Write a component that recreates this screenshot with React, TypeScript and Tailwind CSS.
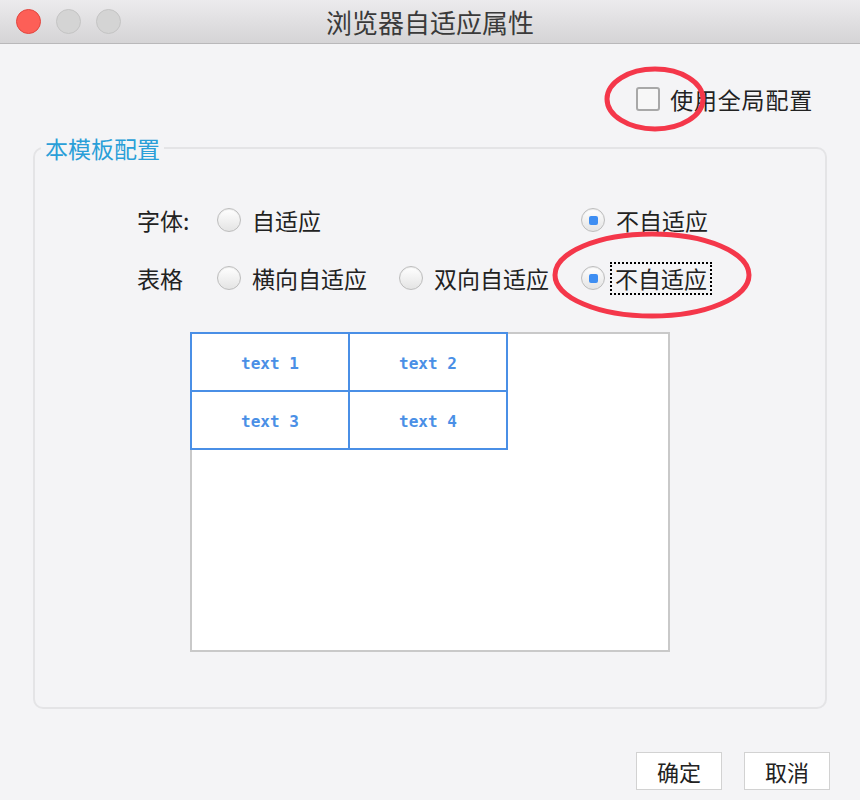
import React from 'react'

const cjk = { fontFamily: '"Noto Sans CJK SC", "Noto Sans", sans-serif' }

function Radio({ checked }: { checked?: boolean }) {
  return (
    <span className="flex h-[24px] w-[24px] items-center justify-center rounded-full border border-[#bdbdbd] bg-gradient-to-b from-[#ffffff] to-[#e4e4e4] shadow-[inset_0_1px_1px_rgba(0,0,0,0.08)]">
      {checked && <span className="h-[9px] w-[9px] rounded-[2px] bg-[#3e8ef2]" />}
    </span>
  )
}

function Option({ label, checked, focused }: { label: string; checked?: boolean; focused?: boolean }) {
  return (
    <label className="flex items-center gap-[11px]">
      <Radio checked={checked} />
      <span className={focused ? 'outline-2 outline-dotted outline-black -ml-[4px] px-[3px] leading-[29px]' : ''}>{label}</span>
    </label>
  )
}

export default function App() {
  const cells = ['text 1', 'text 2', 'text 3', 'text 4']
  return (
    <div className="relative flex h-[800px] w-[860px] flex-col bg-[#f4f4f6] text-[#222]" style={cjk}>
      {/* title bar */}
      <div className="relative flex h-[44px] items-center justify-center border-b border-[#b9b8ba] bg-gradient-to-b from-[#ecebed] to-[#d5d4d6]">
        <div className="absolute left-[16px] top-[9px] flex gap-[15px]">
          <span className="h-[25px] w-[25px] rounded-full border border-[#e2463f] bg-[#fd5f57]" />
          <span className="h-[25px] w-[25px] rounded-full border border-[#c4c4c4] bg-[#d4d4d4]" />
          <span className="h-[25px] w-[25px] rounded-full border border-[#c4c4c4] bg-[#d4d4d4]" />
        </div>
        <span className="text-[26px] text-[#3a3a3a]">浏览器自适应属性</span>
      </div>

      <div className="flex flex-1 flex-col px-[33px]">
        {/* global config */}
        <div className="mt-[43px] flex items-center justify-end gap-[10px] pr-[14px] text-[23px]">
          <span className="h-[24px] w-[24px] rounded-[3px] border-2 border-[#a8a8a8] bg-[#f7f7f7]" />
          <span className="leading-[24px] tracking-[0.8px]">使用全局配置</span>
        </div>

        {/* template config */}
        <fieldset className="mt-[21px] h-[577px] rounded-[10px] border-2 border-[#e4e4e6]">
          <legend className="ml-[6px] px-[4px] text-[23px] leading-[32px] text-[#2a9fd8]">本模板配置</legend>

          <div className="pl-[102px]">
            <div className="mt-[40px] grid grid-cols-[80px_182px_182px_auto] items-center gap-y-[26px] text-[23px] leading-[32px]">
              <span>字体:</span>
              <Option label="自适应" />
              <span />
              <Option label="不自适应" checked />

              <span>表格</span>
              <Option label="横向自适应" />
              <Option label="双向自适应" />
              <Option label="不自适应" checked focused />
            </div>

            {/* preview */}
            <div className="ml-[53px] mt-[38px] h-[320px] w-[480px] border-2 border-[#c9c9c9] bg-white">
              <table className="-ml-[2px] -mt-[2px] border-collapse">
                <tbody>
                  {[0, 1].map((r) => (
                    <tr key={r}>
                      {[0, 1].map((c) => (
                        <td
                          key={c}
                          className="h-[58px] w-[158px] border-2 border-[#4a8fe6] p-0 pt-[3px] text-center text-[16px] font-bold text-[#4a8fe6]"
                          style={{ fontFamily: '"DejaVu Sans Mono", monospace' }}
                        >
                          {cells[r * 2 + c]}
                        </td>
                      ))}
                    </tr>
                  ))}
                </tbody>
              </table>
            </div>
          </div>
        </fieldset>

        {/* buttons */}
        <div className="mt-[43px] flex justify-end gap-[22px]">
          <button className="h-[38px] w-[86px] border border-[#d2d2d2] bg-white text-[22px]">确定</button>
          <button className="-mr-[3px] h-[38px] w-[86px] border border-[#d2d2d2] bg-white text-[22px]">取消</button>
        </div>
      </div>

      {/* annotations */}
      <svg className="pointer-events-none absolute left-0 top-0" width="860" height="800">
        <ellipse cx="655" cy="99" rx="48" ry="30" fill="none" stroke="#f4374a" strokeWidth="5" />
        <ellipse cx="652" cy="275" rx="97" ry="41" fill="none" stroke="#f4374a" strokeWidth="5" />
      </svg>
    </div>
  )
}
